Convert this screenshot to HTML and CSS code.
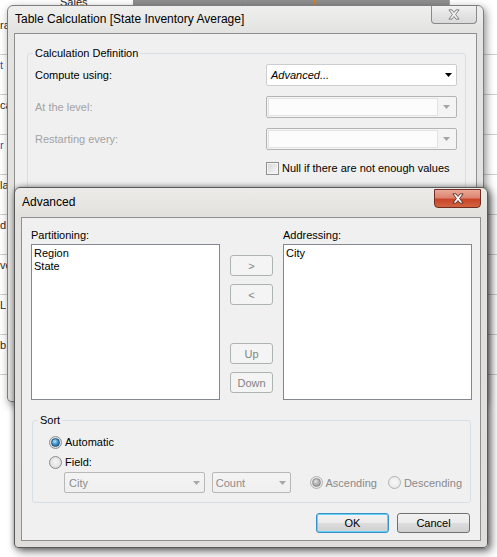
FILE: index.html
```html
<!DOCTYPE html>
<html lang="en">
<head>
<meta charset="utf-8">
<title>Table Calculation</title>
<link rel="stylesheet" href="styles.css">
</head>
<body>
<div class="desktop">
  <div class="app">
    <div class="app-head">
      <div class="head-a"><span class="head-label">Sales</span></div>
      <div class="head-b"></div>
      <div class="head-c"></div>
    </div>
    <div class="app-rows">
      <div class="row"><span class="cell">ra</span></div>
      <div class="row"><span class="cell link">t</span></div>
      <div class="row"><span class="cell">ca</span></div>
      <div class="row"><span class="cell"><span class="link">r</span> P</span></div>
      <div class="row"><span class="cell">la</span></div>
      <div class="row"><span class="cell">d</span></div>
      <div class="row"><span class="cell">ve</span></div>
      <div class="row"><span class="cell">L</span></div>
      <div class="row"><span class="cell">b</span></div>
    </div>
  </div>

  <section class="win win-calc">
    <header class="titlebar">
      <span class="title">Table Calculation [State Inventory Average]</span>
      <span class="close-btn close-inactive">
        <svg width="12" height="11" viewBox="-1 -1 14 13"><path d="M0 0h3.6L6 3.1 8.4 0H12L7.9 5.5 12 11H8.4L6 7.9 3.6 11H0l4.1-5.5z" fill="#f2f2f2" stroke="#6f6f6f" stroke-width="1"/></svg>
      </span>
    </header>
    <div class="client calc-client">
      <fieldset class="group calc-group">
        <legend>Calculation Definition</legend>
        <div class="calc-grid">
          <span class="lbl">Compute using:</span>
          <div class="combo combo-on">
            <span class="combo-text italic">Advanced...</span>
            <svg class="arrow" width="7" height="4" viewBox="0 0 7 4"><path d="M0 0h7L3.5 4z"/></svg>
          </div>
          <span class="lbl disabled">At the level:</span>
          <div class="combo combo-off">
            <span class="combo-field"></span>
            <span class="arrow-box"><svg class="arrow" width="7" height="4" viewBox="0 0 7 4"><path d="M0 0h7L3.5 4z"/></svg></span>
          </div>
          <span class="lbl disabled">Restarting every:</span>
          <div class="combo combo-off">
            <span class="combo-field"></span>
            <span class="arrow-box"><svg class="arrow" width="7" height="4" viewBox="0 0 7 4"><path d="M0 0h7L3.5 4z"/></svg></span>
          </div>
          <span></span>
          <label class="check-row"><span class="checkbox"></span>Null if there are not enough values</label>
        </div>
      </fieldset>
    </div>
  </section>

  <section class="win win-adv">
    <header class="titlebar">
      <span class="title">Advanced</span>
      <span class="close-btn close-active">
        <svg width="12" height="11" viewBox="-1 -1 14 13"><path d="M0 0h3.6L6 3.1 8.4 0H12L7.9 5.5 12 11H8.4L6 7.9 3.6 11H0l4.1-5.5z" fill="#ffffff" stroke="#4b2018" stroke-width="1"/></svg>
      </span>
    </header>
    <div class="client adv-client">
      <div class="lists">
        <span class="lbl">Partitioning:</span>
        <span></span>
        <span class="lbl">Addressing:</span>
        <div class="listbox"><div>Region</div><div>State</div></div>
        <div class="mover">
          <button class="btn btn-off">&gt;</button>
          <button class="btn btn-off">&lt;</button>
          <button class="btn btn-off btn-up">Up</button>
          <button class="btn btn-off">Down</button>
        </div>
        <div class="listbox"><div>City</div></div>
      </div>

      <fieldset class="group sort-group">
        <legend>Sort</legend>
        <div class="sort-body">
          <div class="radio-row"><span class="radio on"></span>Automatic</div>
          <div class="radio-row row-field"><span class="radio"></span>Field:</div>
          <div class="sort-fields">
            <div class="combo combo-dis city">
              <span class="combo-text">City</span>
              <svg class="arrow" width="7" height="4" viewBox="0 0 7 4"><path d="M0 0h7L3.5 4z"/></svg>
            </div>
            <div class="combo combo-dis count">
              <span class="combo-text">Count</span>
              <svg class="arrow" width="7" height="4" viewBox="0 0 7 4"><path d="M0 0h7L3.5 4z"/></svg>
            </div>
            <div class="radio-row dim asc"><span class="radio on dis"></span>Ascending</div>
            <div class="radio-row dim desc"><span class="radio dis"></span>Descending</div>
          </div>
        </div>
      </fieldset>

      <div class="footer">
        <button class="btn btn-push btn-default">OK</button>
        <button class="btn btn-push">Cancel</button>
      </div>
    </div>
  </section>
</div>
</body>
</html>
```

FILE: styles.css
```css
* { box-sizing: border-box; }
html, body { margin: 0; padding: 0; }
body {
  font-family: "Liberation Sans", Arial, sans-serif;
  font-size: 11px;
  color: #000;
  background: #fff;
}
.desktop {
  position: relative;
  width: 497px;
  height: 557px;
  overflow: hidden;
  background: #fff;
}

/* background application */
.app { height: 100%; }
.app-head { display: flex; height: 15px; }
.head-a { width: 133px; display: flex; align-items: flex-start; padding-left: 60px; }
.head-label { font-size: 11px; line-height: 11px; margin-top: -3px; color: #222; }
.head-b {
  width: 316px;
  background-color: #8f8f8f;
  background-image: linear-gradient(90deg, transparent 112px, #d9822b 112px, #d9822b 113px, transparent 113px, transparent 181px, #d9822b 181px, #d9822b 183px, transparent 183px);
}
.head-c { flex: 1; border-left: 1px solid #a8a8a8; }
.row { height: 40px; border-bottom: 1px solid #cfcfcf; }
.cell {
  display: block;
  width: 8px;
  overflow: hidden;
  white-space: nowrap;
  padding-top: 3px;
  line-height: 14px;
  font-size: 11px;
  color: #2a2a2a;
}
.link { color: #2255bb; }

/* windows */
.win {
  position: absolute;
  display: flex;
  flex-direction: column;
  border: 1px solid #7d7d7d;
  border-radius: 6px 6px 4px 4px;
  padding: 0 6px 6px;
  background: linear-gradient(#efefee, #e3e3e1 26px, #e1e1df);
}
.win-calc {
  left: 7px;
  top: 5px;
  width: 477px;
  height: 397px;
  box-shadow: 2px 3px 9px rgba(0, 0, 0, 0.45);
}
.win-adv {
  left: 14px;
  top: 187px;
  width: 474px;
  height: 361px;
  border-color: #5a5a5a;
  background: linear-gradient(#ecebe8, #e2e1dd 28px, #dfdedb);
  box-shadow: 3px 3px 10px rgba(0, 0, 0, 0.6), 0 0 5px rgba(0, 0, 0, 0.3);
}
.titlebar { display: flex; align-items: flex-start; flex: none; }
.win-calc .titlebar { height: 27px; }
.win-adv .titlebar { height: 29px; }
.title { align-self: center; font-size: 12px; line-height: 15px; padding-left: 1px; color: #000; }
.close-btn {
  margin-left: auto;
  display: flex;
  align-items: center;
  justify-content: center;
  border: 1px solid #8a8a8a;
  border-top: none;
  border-radius: 0 0 4px 4px;
}
.close-inactive {
  width: 46px;
  height: 18px;
  background: linear-gradient(#f1f1f1, #e4e4e4 50%, #dadada);
}
.close-active {
  width: 47px;
  height: 19px;
  margin-top: 1px;
  border: 1px solid #6e2d20;
  border-radius: 0 0 4px 4px;
  background: linear-gradient(#eaa898 0%, #dd8470 45%, #c9452a 55%, #d2643f 100%);
}

.client {
  flex: 1;
  min-height: 0;
  display: flex;
  flex-direction: column;
  border: 1px solid #8f8f8f;
  background: #f0f0f0;
}
.calc-client { padding: 12px 10px 0 12px; }
.adv-client { padding: 10px 8px 8px 9px; }

/* group boxes */
.group {
  margin: 0;
  min-width: 0;
  border: 1px solid #d5dfe5;
  border-radius: 3px;
}
.group legend { padding: 0 2px; line-height: 14px; font-size: 11px; }
.calc-group { flex: 1; padding: 4px 8px 10px 7px; }
.calc-group legend { margin-left: -2px; }

.calc-grid {
  display: grid;
  grid-template-columns: 231px 191px;
  grid-template-rows: 22px 22px 22px 16px;
  row-gap: 10px;
  align-items: center;
}
.lbl { line-height: 14px; }
.disabled { color: #a3a3a3; }
.italic { font-style: italic; }

/* combos */
.combo { display: flex; align-items: center; border-radius: 2px; }
.combo-on {
  height: 22px;
  padding: 0 4px;
  border: 1px solid #cdcdcd;
  background: #fff;
}
.combo-text { flex: 1; white-space: nowrap; }
.arrow { flex: none; fill: currentColor; }
.combo-off {
  height: 22px;
  padding: 1px;
  border: 1px solid #b4b4b4;
  background: #f4f4f4;
  color: #a5a5a5;
}
.combo-field { flex: 1; align-self: stretch; border: 1px solid #e3e3e3; background: #fcfcfc; }
.arrow-box { width: 17px; display: flex; justify-content: center; }
.combo-dis {
  height: 21px;
  padding: 0 4px;
  border: 1px solid #b8b8b8;
  background: linear-gradient(#f4f4f4, #efefef);
  color: #8d8d8d;
}
.combo-dis .arrow { color: #a8a8a8; }
.city { width: 143px; }
.count { width: 80px; margin-left: 7px; padding-left: 3px; }

/* checkbox */
.check-row { display: flex; align-items: center; gap: 3px; line-height: 14px; }
.checkbox {
  width: 13px;
  height: 13px;
  flex: none;
  border: 1px solid #8e8f8f;
  background: linear-gradient(135deg, #d6d6d6, #f8f8f8);
  box-shadow: inset 0 0 0 1px #f6f6f6;
}

/* lists */
.lists {
  display: grid;
  grid-template-columns: 189px 43px 189px;
  grid-template-rows: 14px 156px;
  column-gap: 10px;
  row-gap: 2px;
}
.listbox {
  border: 1px solid #828790;
  background: #fff;
  padding: 2px 2px;
  line-height: 13px;
}
.mover { display: flex; flex-direction: column; gap: 8px; padding-top: 11px; }
.btn {
  font: inherit;
  display: flex;
  align-items: center;
  justify-content: center;
  width: 43px;
  height: 21px;
  padding: 0;
  border-radius: 3px;
}
.btn-off { border: 1px solid #adb2b5; background: #f4f4f4; color: #838383; }
.btn-up { margin-top: 30px; }

/* sort */
.sort-group { margin: 13px 0 0 1px; width: 439px; padding: 7px 8px 9px 16px; }
.sort-group legend { margin-left: -11px; }
.sort-body { display: flex; flex-direction: column; }
.radio-row { display: flex; align-items: center; gap: 3px; height: 16px; white-space: nowrap; }
.row-field { margin-top: 4px; }
.radio {
  width: 13px;
  height: 13px;
  flex: none;
  display: grid;
  place-items: center;
  border-radius: 50%;
  border: 1px solid #8b8c8c;
  background: radial-gradient(circle at 50% 45%, #f6f6f6 0, #e4e4e4 55%, #c9c9c9 100%);
}
.radio.on::after {
  content: "";
  width: 7px;
  height: 7px;
  border-radius: 50%;
  border: 1px solid #1f4f78;
  background: radial-gradient(circle at 40% 35%, #b4e6ff 0, #4597cf 45%, #14507f 100%);
}
.radio.dis { border-color: #b2b2b2; background: radial-gradient(circle at 50% 45%, #f8f8f8 0, #ececec 60%, #dcdcdc 100%); }
.radio.on.dis::after { border-color: #8a8a8a; background: radial-gradient(circle at 40% 35%, #e4e4e4 0, #b0b0b0 50%, #8c8c8c 100%); }
.sort-fields { display: flex; align-items: center; height: 21px; margin-top: 2px; margin-left: 15px; }
.dim { color: #8a8a8a; }
.asc { margin-left: 19px; }
.desc { margin-left: 11px; }

/* footer */
.footer { display: flex; justify-content: flex-end; gap: 8px; margin-top: 10px; padding-right: 2px; }
.btn-push {
  width: 73px;
  height: 20px;
  border: 1px solid #707070;
  color: #000;
  background: linear-gradient(#f2f2f2 0%, #ebebeb 50%, #dddddd 51%, #cfcfcf 100%);
}
.btn-default { border-color: #3c8fc4; box-shadow: inset 0 0 0 1px #62d4f8; }
```
